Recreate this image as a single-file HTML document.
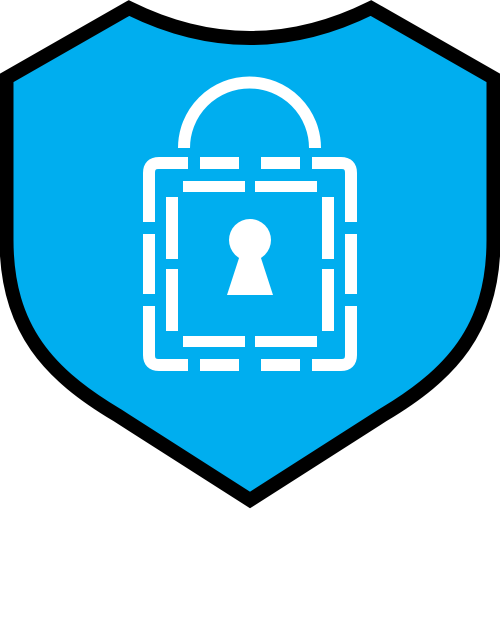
<!DOCTYPE html>
<html><head><meta charset="utf-8"><style>
html,body{margin:0;padding:0;background:#fff;width:500px;height:630px;overflow:hidden}
svg{display:block}
</style></head><body>
<svg width="500" height="630" viewBox="0 0 500 630" xmlns="http://www.w3.org/2000/svg">
<path d="M129,8 Q250,68 371,8 L493.5,78 L493.5,240 C493.5,330 450,375 383,415 L250,500 L117,415 C50,375 6.5,330 6.5,240 L6.5,78 Z" fill="#00AEEF" stroke="#000" stroke-width="14" stroke-linejoin="miter"/>
<g fill="none" stroke="#fff" stroke-width="12">
<path d="M184,148 A65.5,65.5 0 0 1 315,148"/>
<path d="M188,163 L159,163 Q149,163 149,173 L149,222"/>
<path d="M312,163 L341,163 Q351,163 351,173 L351,222"/>
<path d="M188,365 L159,365 Q149,365 149,355 L149,306"/>
<path d="M312,365 L341,365 Q351,365 351,355 L351,306"/>
</g>
<g fill="#fff">
<rect x="200" y="157" width="39" height="12"/>
<rect x="261" y="157" width="39" height="12"/>
<rect x="200" y="359" width="39" height="12"/>
<rect x="261" y="359" width="39" height="12"/>
<rect x="143" y="234" width="12" height="60"/>
<rect x="345" y="234" width="12" height="60"/>
<rect x="183" y="181" width="62" height="11"/>
<rect x="255" y="181" width="62" height="11"/>
<rect x="183" y="336" width="62" height="11"/>
<rect x="255" y="336" width="62" height="11"/>
<rect x="166" y="197" width="12" height="62"/>
<rect x="166" y="269" width="12" height="62"/>
<rect x="322" y="197" width="12" height="62"/>
<rect x="322" y="269" width="12" height="62"/>
<circle cx="250" cy="240" r="21"/>
<path d="M240,255 L260,255 L273,295 L227,295 Z"/>
</g>
</svg>
</body></html>
